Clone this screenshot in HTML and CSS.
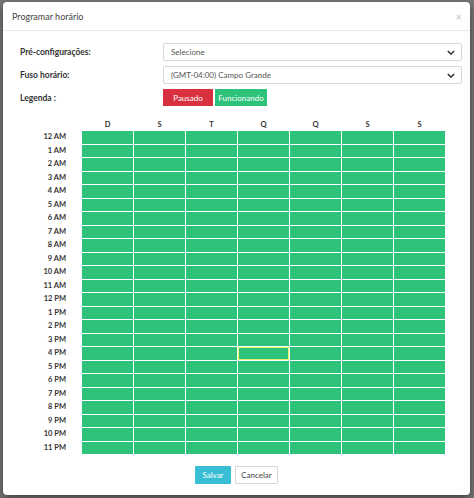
FILE: index.html
```html
<!DOCTYPE html>
<html lang="pt">
<head>
<meta charset="utf-8">
<title>Programar horário</title>
<link rel="stylesheet" href="styles.css">
</head>
<body>
<div class="modal">
  <div class="modal-header">
    <span class="modal-title">Programar horário</span>
    <span class="close">×</span>
  </div>
  <div class="modal-body">
    <div class="form-row">
      <label class="form-label">Pré-configurações:</label>
      <div class="select"><span>Selecione</span><svg class="chev" viewBox="0 0 10 6" width="8" height="5"><path d="M1 1 L5 5 L9 1" fill="none" stroke="#333" stroke-width="1.8"/></svg></div>
    </div>
    <div class="form-row">
      <label class="form-label">Fuso horário:</label>
      <div class="select"><span>(GMT-04:00) Campo Grande</span><svg class="chev" viewBox="0 0 10 6" width="8" height="5"><path d="M1 1 L5 5 L9 1" fill="none" stroke="#333" stroke-width="1.8"/></svg></div>
    </div>
    <div class="form-row legend-row">
      <label class="form-label">Legenda :</label>
      <div class="legend">
        <span class="tag tag-paused">Pausado</span>
        <span class="tag tag-on">Funcionando</span>
      </div>
    </div>
    <div class="schedule" id="schedule">
      <div class="corner"></div>
      <div class="day">D</div><div class="day">S</div><div class="day">T</div><div class="day">Q</div><div class="day">Q</div><div class="day">S</div><div class="day">S</div>
    </div>
  </div>
  <div class="modal-footer">
    <button class="btn btn-save">Salvar</button>
    <button class="btn btn-cancel">Cancelar</button>
  </div>
</div>
<script>
  var s = document.getElementById('schedule');
  var hours = [];
  for (var h = 0; h < 24; h++) {
    var hh = h % 12 === 0 ? 12 : h % 12;
    hours.push(hh + (h < 12 ? ' AM' : ' PM'));
  }
  hours.forEach(function (lbl, r) {
    var l = document.createElement('div');
    l.className = 'hour';
    l.textContent = lbl;
    s.appendChild(l);
    for (var c = 0; c < 7; c++) {
      var d = document.createElement('div');
      d.className = 'cell' + (r === 16 && c === 3 ? ' cell-hover' : '');
      s.appendChild(d);
    }
  });
</script>
</body>
</html>
```

FILE: styles.css
```css
* { box-sizing: border-box; }
html, body { margin: 0; padding: 0; }
body {
  width: 474px;
  height: 498px;
  background: #787878;
  font-family: Lato, "Open Sans", "Liberation Sans", sans-serif;
  color: #333;
  overflow: hidden;
  padding: 2px 4px 0 3px;
}
.modal {
  width: 467px;
  height: 493px;
  background: #fff;
  border-radius: 4px;
  box-shadow: 0 3px 10px rgba(0,0,0,0.5);
  display: flex;
  flex-direction: column;
}
.modal-header {
  height: 29px;
  border-bottom: 1px solid #e9e9e9;
  display: flex;
  align-items: center;
  justify-content: space-between;
  padding: 0 8px 0 9px;
}
.modal-title { font-size: 9px; color: #444; }
.close { font-size: 11px; color: #c4c4c4; line-height: 1; }
.modal-body { padding: 12px 8px 0 17px; }
.form-row {
  display: flex;
  align-items: center;
  height: 18px;
  margin-bottom: 5px;
}
.legend-row { margin-top: 2px; height: 17px; margin-bottom: 13px; }
.form-label {
  width: 143px;
  font-size: 8.5px;
  font-weight: bold;
  color: #333;
}
.select {
  flex: 1;
  height: 18px;
  border: 1px solid #d6d6d6;
  border-radius: 2px;
  display: flex;
  align-items: center;
  justify-content: space-between;
  padding: 0 6px 0 7px;
  font-size: 8px;
  color: #555;
}
.legend { display: flex; gap: 2px; }
.tag {
  height: 17px;
  display: flex;
  align-items: center;
  justify-content: center;
  color: #fff;
  font-size: 8px;
}
.tag-paused { width: 50px; background: #d9303f; }
.tag-on { width: 52px; background: #2ec27a; }
.schedule {
  display: grid;
  grid-template-columns: 61px repeat(7, 51px);
  grid-template-rows: 11px repeat(24, 12.5px);
  gap: 1px;
}
.day {
  font-size: 7.5px;
  font-weight: bold;
  text-align: center;
  line-height: 11px;
  color: #333;
}
.hour {
  font-size: 7.5px;
  font-weight: bold;
  text-align: right;
  padding-right: 15px;
  line-height: 12.5px;
  color: #333;
}
.cell { background: #2ec27a; }
.cell-hover { box-shadow: inset 0 0 0 1px #e4f26a; }
.modal-footer {
  display: flex;
  justify-content: center;
  gap: 4px;
  padding-top: 12px;
}
.btn {
  height: 18px;
  font-family: inherit;
  font-size: 8px;
  padding: 0;
  border-radius: 1px;
  cursor: pointer;
}
.btn-save { width: 36px; background: #39bfd4; border: 1px solid #39bfd4; color: #fff; }
.btn-cancel { width: 43px; background: #fff; border: 1px solid #d6d6d6; color: #444; }
```
